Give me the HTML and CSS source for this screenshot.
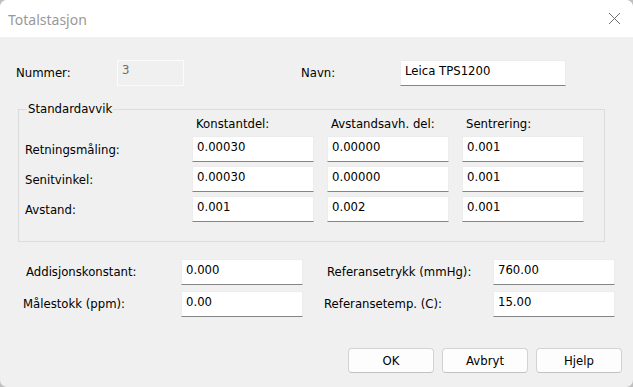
FILE: index.html
```html
<!DOCTYPE html>
<html>
<head>
	<title>Totalstasjon</title>
	<link rel="stylesheet" href="styles.css">
</head>
<body>
	<div class="window">
		<div class="titlebar">
			<span class="title">Totalstasjon</span>
			<span class="close">
				<svg width="13" height="13" viewBox="0 0 13 13"><path d="M1 1 L12 12 M12 1 L1 12" stroke="#707070" stroke-width="1" fill="none"/></svg>
			</span>
		</div>
		<div class="content">
			<div class="toprow">
				<span class="lbl lbl-num">Nummer:</span>
				<div class="field disabled num">3</div>
				<span class="lbl lbl-navn">Navn:</span>
				<div class="field navn">Leica TPS1200</div>
			</div>

			<fieldset class="group">
				<legend>Standardavvik</legend>
				<div class="grid">
					<span></span>
					<span class="colhead">Konstantdel:</span>
					<span class="colhead">Avstandsavh. del:</span>
					<span class="colhead">Sentrering:</span>

					<span class="lbl">Retningsmåling:</span>
					<div class="field">0.00030</div>
					<div class="field">0.00000</div>
					<div class="field">0.001</div>

					<span class="lbl">Senitvinkel:</span>
					<div class="field">0.00030</div>
					<div class="field">0.00000</div>
					<div class="field">0.001</div>

					<span class="lbl">Avstand:</span>
					<div class="field">0.001</div>
					<div class="field">0.002</div>
					<div class="field">0.001</div>
				</div>
			</fieldset>

			<div class="lower">
				<span class="lbl l-add">Addisjonskonstant:</span>
				<div class="field">0.000</div>
				<span class="lbl l-trykk">Referansetrykk (mmHg):</span>
				<div class="field">760.00</div>

				<span class="lbl l-skala">Målestokk (ppm):</span>
				<div class="field">0.00</div>
				<span class="lbl l-temp">Referansetemp. (C):</span>
				<div class="field">15.00</div>
			</div>

			<div class="buttons">
				<div class="btn">OK</div>
				<div class="btn">Avbryt</div>
				<div class="btn">Hjelp</div>
			</div>
		</div>
	</div>
</body>
</html>
```

FILE: styles.css
```css
html {
	background: #bfbfbf;
}
body {
	margin: 0;
	font-family: "DejaVu Sans", sans-serif;
	font-size: 11.7px;
	color: #000;
}
.window {
	width: 633px;
	height: 387px;
	background: #f0f0f0;
	border-radius: 7px;
	overflow: hidden;
}
.titlebar {
	height: 37px;
	background: #fff;
	display: flex;
	align-items: center;
	justify-content: space-between;
	padding: 0 0 0 8px;
}
.title {
	font-family: "Noto Sans", sans-serif;
	font-size: 14px;
	color: #999;
	margin-top: 1px;
}
.close {
	width: 46px;
	height: 37px;
	display: flex;
	align-items: center;
	justify-content: center;
	margin-right: -4px;
}
.close svg {
	display: block;
}
.content {
	padding-top: 23px;
}
.lbl {
	line-height: 14px;
	white-space: nowrap;
}
.field {
	box-sizing: border-box;
	height: 26px;
	background: #fff;
	border: 1px solid #ececec;
	border-bottom-color: #858585;
	padding: 3px 4px 0;
	line-height: 14px;
	white-space: nowrap;
}
.field.disabled {
	background: #f0f0f0;
	border: 1px solid #fbfbfb;
	color: #6d6d6d;
	padding-top: 2px;
}

/* top row */
.toprow {
	display: flex;
	align-items: center;
}
.lbl-num {
	width: 101px;
	margin-left: 16px;
}
.num {
	width: 67px;
}
.lbl-navn {
	width: 99px;
	margin-left: 117px;
}
.navn {
	width: 166px;
}

/* group box */
.group {
	box-sizing: border-box;
	width: 587px;
	margin: 16px 0 0 18px;
	padding: 1px 6px 19px 6px;
	border: 1px solid #dcdcdc;
	min-width: 0;
}
.group legend {
	padding: 0 1px;
	margin-left: 2px;
	line-height: 14px;
}
.grid {
	display: grid;
	grid-template-columns: 154px 122px 122px 122px;
	grid-template-rows: 15px;
	grid-auto-rows: 26px;
	column-gap: 13px;
	row-gap: 4px;
	align-items: center;
}
.colhead {
	padding-left: 4px;
	line-height: 14px;
	align-self: start;
}
.grid .lbl {
	padding-top: 2px;
}

/* lower fields */
.lower {
	display: grid;
	grid-template-columns: 163px 122px 190px 122px;
	grid-auto-rows: 26px;
	row-gap: 6px;
	align-items: center;
	margin: 17px 0 0 18px;
}
.l-add { padding-left: 8px; }
.l-skala { padding-left: 5px; }
.l-trykk { padding-left: 24px; }
.l-temp { padding-left: 21px; }

/* buttons */
.buttons {
	display: flex;
	justify-content: flex-end;
	gap: 8px;
	margin-top: 31px;
	padding-right: 11px;
}
.btn {
	box-sizing: border-box;
	width: 86px;
	height: 25px;
	background: #fdfdfd;
	border: 1px solid #d3d3d3;
	border-bottom-color: #c2c2c2;
	border-radius: 4px;
	display: flex;
	align-items: center;
	justify-content: center;
}
```
